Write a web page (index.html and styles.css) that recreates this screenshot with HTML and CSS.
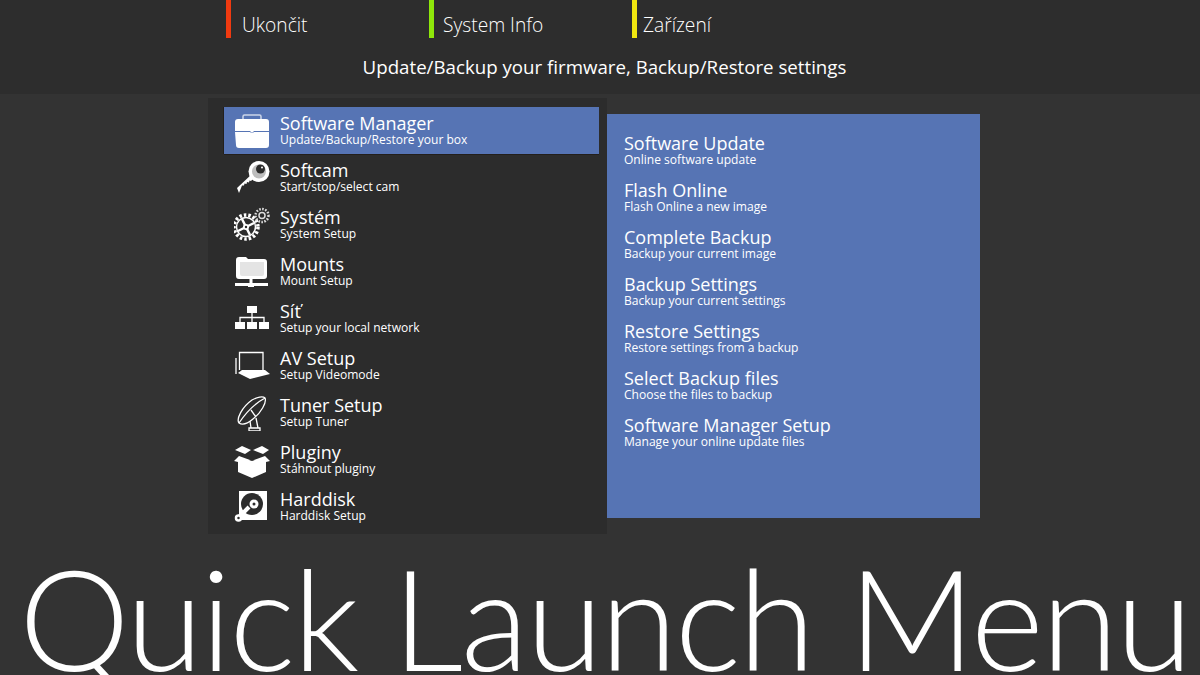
FILE: index.html
```html
<!DOCTYPE html>
<html lang="cs">
<head>
<meta charset="utf-8">
<title>Quick Launch Menu</title>
<link rel="stylesheet" href="styles.css">
</head>
<body>
<header class="top">
  <div class="keys">
    <div class="key key-red">Ukončit</div>
    <div class="key key-green">System Info</div>
    <div class="key key-yellow">Zařízení</div>
  </div>
  <div class="desc">Update/Backup your firmware, Backup/Restore settings</div>
</header>
<main class="menus">
  <section class="left">
    <div class="row selected">
      <svg class="ico" viewBox="0 0 36 36"><path class="ln" d="M9 7V3.500q0-1.500 1.500-1.500h15q1.500 0 1.500 1.500V7" /><path class="fl" d="M1 9q0-3 3-3h28q3 0 3 3v9H1zM1 19h15.500v1h3v-1H35v13q0 3-3 3H5q-3 0-3-3z"/><rect class="fl" x="16.500" y="16" width="3" height="3.500"/></svg>
      <div class="txt"><div class="t">Software Manager</div><div class="s">Update/Backup/Restore your box</div></div>
    </div>
    <div class="row">
      <svg class="ico" viewBox="0 0 36 36"><path class="fl" d="M3 28L18 14l3 3-4 4-1.500-.5-.5 2-2-.5-.5 2-2-.5-.5 2-2 0L5 33z"/><circle class="fl" cx="25" cy="11.500" r="10.500"/><circle class="shade2" cx="25" cy="11.500" r="7"/><circle class="hole" cx="26.500" cy="9" r="4.500"/><circle class="fl" cx="28" cy="7.500" r="1"/></svg>
      <div class="txt"><div class="t">Softcam</div><div class="s">Start/stop/select cam</div></div>
    </div>
    <div class="row">
      <svg class="ico" viewBox="0 0 36 36"><circle class="dash" cx="12" cy="20" r="12"/><circle class="ring" cx="12" cy="20" r="9.500"/><path class="bar" d="M8 12l8 16M4 24l16-8"/><circle class="fl" cx="12" cy="20" r="3"/><circle class="hole" cx="12" cy="20" r="1.200"/><circle class="dash2" cx="28" cy="8.500" r="6.500"/><circle class="ring2" cx="28" cy="8.500" r="3"/></svg>
      <div class="txt"><div class="t">Systém</div><div class="s">System Setup</div></div>
    </div>
    <div class="row">
      <svg class="ico" viewBox="0 0 36 36"><path class="fl" d="M2 6q0-3 3-3h7l2 2h16q3 0 3 3v14q0 3-3 3H5q-3 0-3-3z"/><path class="shade" d="M6 8h24v12q0 2-2 2H8q-2 0-2-2z"/><path class="fl" d="M15.500 25h3v4H34v3H20v1h-6v-1H1v-3h14.500z"/></svg>
      <div class="txt"><div class="t">Mounts</div><div class="s">Mount Setup</div></div>
    </div>
    <div class="row">
      <svg class="ico" viewBox="0 0 36 36"><rect class="fl" x="13" y="5" width="10" height="7"/><path class="thin" d="M18 12v9M6 21v-4.500h24V21"/><rect class="fl" x="1" y="21" width="10" height="7"/><rect class="fl" x="13" y="21" width="10" height="7"/><rect class="fl" x="25" y="21" width="10" height="7"/></svg>
      <div class="txt"><div class="t">Síť</div><div class="s">Setup your local network</div></div>
    </div>
    <div class="row">
      <svg class="ico" viewBox="0 0 36 36"><path class="thin" d="M5.500 22V4.500h23.500V22"/><path class="thin" d="M2 10v16"/><path class="fl" d="M4 25l4-3h23l5 4-20 5z"/></svg>
      <div class="txt"><div class="t">AV Setup</div><div class="s">Setup Videomode</div></div>
    </div>
    <div class="row">
      <svg class="ico" viewBox="0 0 36 36"><path class="thin" d="M5 28C2 24 8 12 18 5c5-3 11-4 13-2 2 4-4 15-12 21-6 5-11 6-14 4zM5 28C9 22 18 10 31 3M17 15l5 7"/><path class="thin" d="M16 26l1 7M22 23l2 10M15 33h11v3H15z"/></svg>
      <div class="txt"><div class="t">Tuner Setup</div><div class="s">Setup Tuner</div></div>
    </div>
    <div class="row">
      <svg class="ico" viewBox="0 0 36 36"><path class="fl" d="M4 15l14 4 14-4v15l-14 6-14-6z"/><path class="fl" d="M1 8l7-4 9 4-6 4zM19 8l9-4 7 4-6 4zM0 19l5-5 11 4-4 4zM36 19l-5-5-11 4 4 4z"/></svg>
      <div class="txt"><div class="t">Pluginy</div><div class="s">Stáhnout pluginy</div></div>
    </div>
    <div class="row">
      <svg class="ico" viewBox="0 0 36 36"><path class="fl" d="M5 2h28v29H5z"/><circle class="disc" cx="18" cy="15" r="11"/><circle class="fl" cx="20" cy="15" r="4.500"/><circle class="disc" cx="20" cy="15" r="1.500"/><path class="arm" d="M5 28l10-10"/><circle class="pin" cx="4.500" cy="29" r="2.500"/></svg>
      <div class="txt"><div class="t">Harddisk</div><div class="s">Harddisk Setup</div></div>
    </div>
  </section>
  <section class="right">
    <div class="sub"><div class="t">Software Update</div><div class="s">Online software update</div></div>
    <div class="sub"><div class="t">Flash Online</div><div class="s">Flash Online a new image</div></div>
    <div class="sub"><div class="t">Complete Backup</div><div class="s">Backup your current image</div></div>
    <div class="sub"><div class="t">Backup Settings</div><div class="s">Backup your current settings</div></div>
    <div class="sub"><div class="t">Restore Settings</div><div class="s">Restore settings from a backup</div></div>
    <div class="sub"><div class="t">Select Backup files</div><div class="s">Choose the files to backup</div></div>
    <div class="sub"><div class="t">Software Manager Setup</div><div class="s">Manage your online update files</div></div>
  </section>
</main>
<div class="big">Quick Launch Menu</div>
</body>
</html>
```
FILE: styles.css
```css
* { box-sizing: border-box; }
html, body { margin: 0; height: 100%; }
body {
  width: 1200px; height: 675px; overflow: hidden;
  background: #333333; color: #fff;
  font-family: "Open Sans", "Noto Sans", sans-serif;
}
.top { height: 94px; background: #2d2d2d; }
.keys { display: flex; padding-left: 226px; height: 38px; }
.key {
  width: 203px; padding-left: 11px; border-left: 5px solid;
  font-size: 19.200px; font-weight: 300; line-height: 50px; height: 38px;
  white-space: nowrap;
}
.key-red { border-color: #f03a10; }
.key-green { border-color: #8ee60a; padding-left: 9px; }
.key-yellow { border-color: #f0e610; padding-left: 6px; }
.desc { text-align: center; padding-left: 9px; margin-top: 16px; font-size: 18.700px; line-height: 26px; }
.menus { display: flex; align-items: flex-start; padding: 4px 0 0 208px; }
.left { width: 399px; height: 436px; background: #2c2c2c; padding: 9px 8px 0 16px; }
.row { display: flex; align-items: center; height: 47px; }
.row.selected { background: #5674b4; box-shadow: 0 1px 0 #231f1c, -1px 0 0 #231f1c; }
.ico { width: 36px; height: 36px; margin: 0 10px 0 10px; flex: none; }
.t { font-size: 18px; line-height: 20px; white-space: nowrap; }
.s { font-size: 12.050px; line-height: 13px; white-space: nowrap; }
.txt { margin-top: -2px; }
.right { width: 373px; height: 404px; margin-top: 16px; background: #5674b4; padding: 19px 0 0 17px; }
.sub { height: 47px; }
.big {
  font-family: Lato, "Open Sans", sans-serif;
  font-size: 140px; font-weight: 300; line-height: 170px; letter-spacing: -2.500px; white-space: nowrap;
  margin-top: -2px; padding-left: 19px;
}
.fl { fill: #fff; }
.ln, .thin { fill: none; stroke: #fff; }
.ln { stroke-width: 1.500px; opacity: .7; }
.thin { stroke-width: 1.300px; }
.hole { fill: #2c2c2c; }
.shade { fill: #e4e4e4; }
.shade2 { fill: #bdbdbd; }
.dash { fill: none; stroke: #fff; stroke-width: 3.500px; stroke-dasharray: 2.500 2; }
.ring { fill: none; stroke: #fff; stroke-width: 1.500px; }
.bar { stroke: #fff; stroke-width: 2.500px; }
.dash2 { fill: none; stroke: #ddd; stroke-width: 2.500px; stroke-dasharray: 1.600 1.400; }
.ring2 { fill: none; stroke: #ddd; stroke-width: 1.500px; }
.disc { fill: #2c2c2c; }
.arm { stroke: #fff; stroke-width: 4px; }
.pin { fill: #2c2c2c; stroke: #fff; stroke-width: 2.500px; }
```
